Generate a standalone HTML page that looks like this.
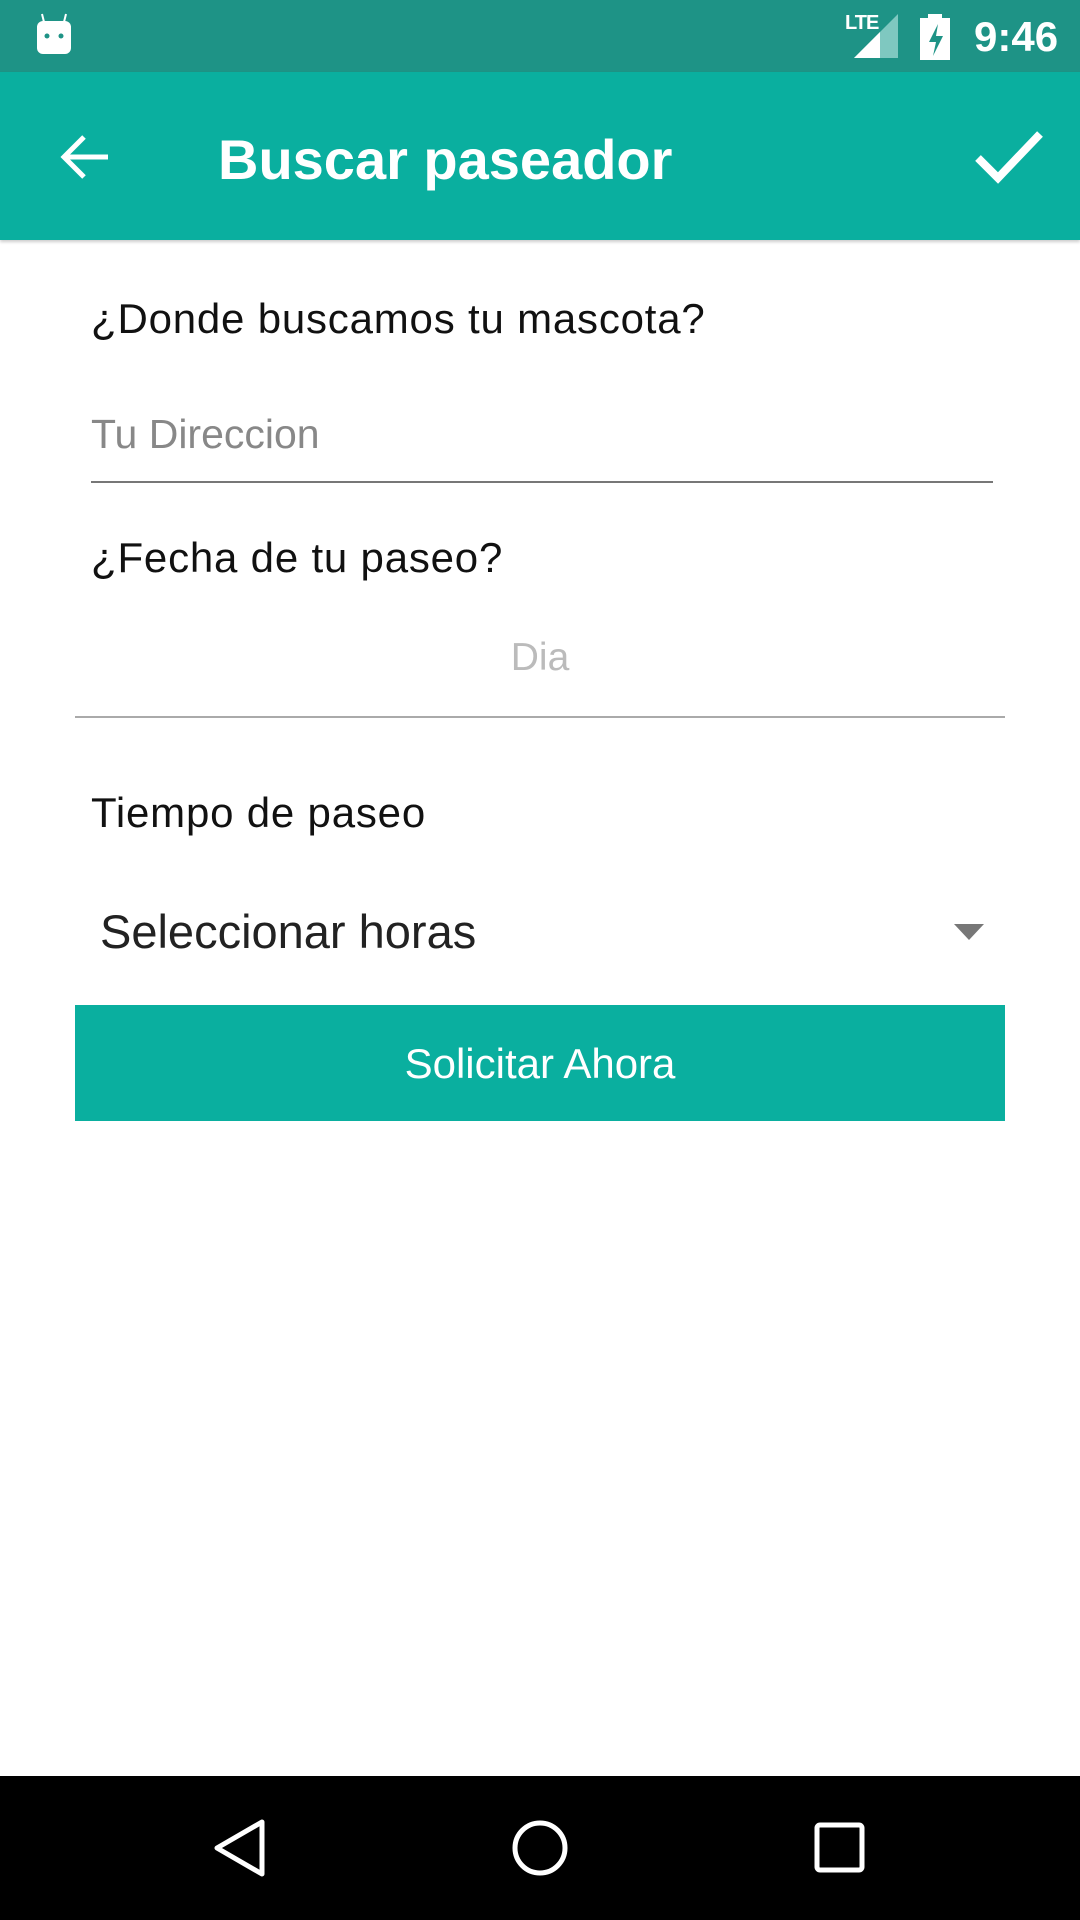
<!DOCTYPE html>
<html><head><meta charset="utf-8"><style>
body{margin:0;width:1080px;height:1920px;position:relative;background:#fff;font-family:"Liberation Sans",sans-serif;overflow:hidden}
.a{position:absolute;white-space:nowrap}
.l{color:#111;font-size:42px;letter-spacing:0.8px}
</style></head><body>
<div class="a" style="left:0;top:0;width:1080px;height:72px;background:#1e9386"></div>
<svg class="a" style="left:34px;top:12px" width="40" height="44" viewBox="0 0 40 44"><path d="M8 2l2 8M32 2l-2 8" stroke="#fff" stroke-width="2"/><rect x="3" y="9" width="34" height="33" rx="6" fill="#fff"/><circle cx="13" cy="24" r="2.5" fill="#1e9386"/><circle cx="27" cy="24" r="2.5" fill="#1e9386"/></svg>
<div class="a" style="left:845px;top:12px;color:#fff;font-size:20px;font-weight:bold;letter-spacing:-1px">LTE</div>
<svg class="a" style="left:854px;top:14px" width="44" height="44"><polygon points="44,0 44,44 0,44" fill="#7fc8c0"/><polygon points="26,18 26,44 0,44" fill="#fff"/></svg>
<svg class="a" style="left:920px;top:14px" width="30" height="46"><rect x="8" y="0" width="14" height="5" fill="#fff"/><rect x="0" y="4" width="30" height="42" fill="#fff"/><path d="M18 10l-9 18h7l-3 14 10-20h-7z" fill="#1e9386"/></svg>
<div class="a" style="left:974px;top:13px;color:#fff;font-size:42px;font-weight:bold">9:46</div>
<div class="a" style="left:0;top:72px;width:1080px;height:168px;background:#0aaf9f;box-shadow:0 2px 3px rgba(0,0,0,.2)"></div>
<svg class="a" style="left:58px;top:133px" width="52" height="48" viewBox="0 0 52 48"><path d="M50 24H6M26 4L6 24l20 20" stroke="#fff" stroke-width="5" fill="none"/></svg>
<div class="a" style="left:218px;top:127px;color:#fff;font-size:56px;font-weight:bold">Buscar paseador</div>
<svg class="a" style="left:974px;top:128px" width="70" height="56" viewBox="0 0 70 56"><path d="M4 30l20 20L66 6" stroke="#fff" stroke-width="8" fill="none"/></svg>
<div class="a l" style="left:91px;top:295px">¿Donde buscamos tu mascota?</div>
<div class="a" style="left:91px;top:411px;color:#888;font-size:41px">Tu Direccion</div>
<div class="a" style="left:91px;top:481px;width:902px;height:2px;background:#777"></div>
<div class="a l" style="left:91px;top:534px">¿Fecha de tu paseo?</div>
<div class="a" style="left:0;top:636px;width:1080px;text-align:center;color:#bbb;font-size:39px">Dia</div>
<div class="a" style="left:75px;top:716px;width:930px;height:2px;background:#aaa"></div>
<div class="a l" style="left:91px;top:789px">Tiempo de paseo</div>
<div class="a" style="left:100px;top:904px;color:#222;font-size:47px">Seleccionar horas</div>
<svg class="a" style="left:954px;top:924px" width="30" height="16"><polygon points="0,0 30,0 15,16" fill="#777"/></svg>
<div class="a" style="left:75px;top:1005px;width:930px;height:116px;background:#0aaf9f;color:#fff;font-size:42px;text-align:center;line-height:118px">Solicitar Ahora</div>
<div class="a" style="left:0;top:1776px;width:1080px;height:144px;background:#000"></div>
<svg class="a" style="left:0;top:1776px" width="1080" height="144"><path d="M262 46v52L217 72z" stroke="#fff" stroke-width="5" fill="none" stroke-linejoin="round"/><circle cx="540" cy="72" r="25" stroke="#fff" stroke-width="5" fill="none"/><rect x="817" y="49" width="45" height="45" rx="3" stroke="#fff" stroke-width="5" fill="none"/></svg>
</body></html>
